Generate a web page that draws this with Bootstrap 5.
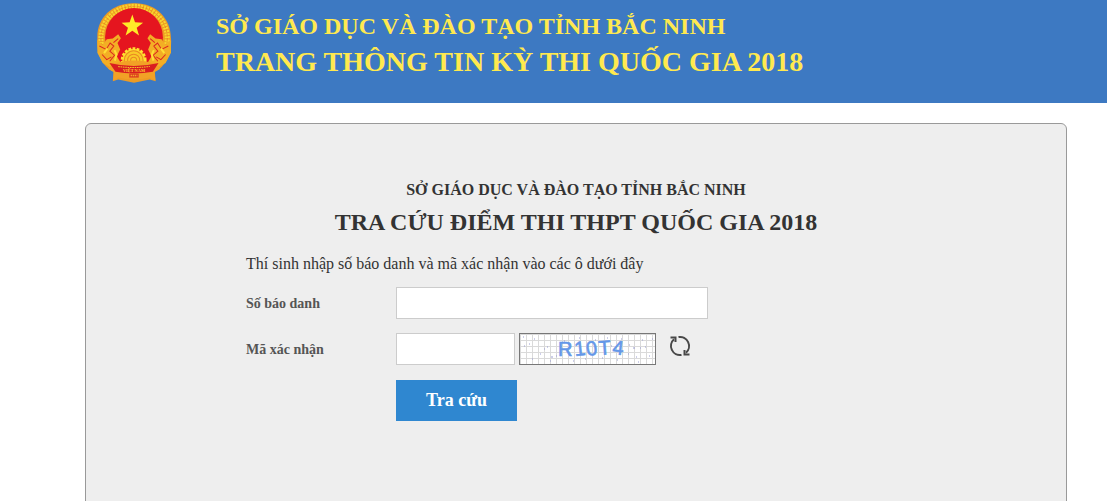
<!DOCTYPE html>
<html lang="vi">
<head>
<meta charset="utf-8">
<meta name="viewport" content="width=device-width, initial-scale=1">
<title>Tra cứu điểm thi THPT Quốc gia 2018</title>
<link href="https://cdn.jsdelivr.net/npm/bootstrap@5.3.0/dist/css/bootstrap.min.css" rel="stylesheet">
<style>
  body { font-family: "Liberation Serif", "Times New Roman", serif; color: #333; background: #fff; overflow-x: hidden; }
  .site-header { background: #3d79c2; color: #ffe94f; min-height: 103px; padding: 3px 40px 0 96px; gap: 44px; }
  .emblem { width: 76px; height: 80px; flex: none; }
  .header-text { padding-top: 7px; }
  .dept-name { font-size: 24px; line-height: 32px; }
  .site-name { font-size: 28px; line-height: 40px; }
  .page-area { padding: 20px 40px 0 85px; }
  .lookup-panel { background: #eee; border: 1px solid #999; border-radius: 6px; padding: 52px 16px 90px; }
  .lookup-form { max-width: 660px; }
  .form-dept { font-size: 16px; line-height: 28px; }
  .form-title { font-size: 24px; line-height: 36px; }
  .form-hint { font-size: 16px; line-height: 24px; margin: 12px 0 11px; }
  .field-row { margin-bottom: 14px; }
  .field-label { width: 150px; flex: none; font-size: 14px; color: #555; }
  .field-input { height: 32px; border: 1px solid #ccc; border-radius: 0; padding: 4px 8px; font-size: 16px; }
  .field-wide { width: 312px; }
  .field-code { width: 119px; }
  .captcha { width: 137px; height: 32px; border: 1px solid #777; background: #fff; }
  .captcha text { font-family: "Liberation Sans", Arial, sans-serif; }
  .reload-btn { margin: 0 0 6px 9px; line-height: 1; color: #484848; }
  .submit-btn { width: 121px; height: 41px; margin: 1px 0 0 150px; border-radius: 0; background: #2f87d0; color: #fff; font-size: 18px; font-weight: 700; padding: 0; }
  .submit-btn:hover { background: #2878bb; color: #fff; }
</style>
<script src="https://cdn.jsdelivr.net/npm/bootstrap@5.3.0/dist/js/bootstrap.bundle.min.js"></script>
</head>
<body>
<header class="site-header d-flex align-items-start">
  <svg class="emblem" viewBox="20 11 226 236" preserveAspectRatio="none" role="img" aria-label="Quốc huy Việt Nam">
    <path d="M133 12C70 10 22 55 24 115C21 148 30 184 60 207L72 212L70 242L86 237L133 246L180 237L197 242L195 212L207 207C236 184 246 148 243 115C243 55 196 10 133 12Z" fill="#ed9b24"/>
    <path d="M40 150C18 80 66 21 133 21S250 80 226 150" fill="none" stroke="#f8d62e" stroke-width="15" stroke-dasharray="6 3"/>
    <path d="M40 150C18 80 66 21 133 21S250 80 226 150" fill="none" stroke="#e87822" stroke-width="2" stroke-dasharray="9 4"/>
    <circle cx="133" cy="112" r="86" fill="#e5151f"/>
    <path d="M24 120l16 16 12-18 18-2 16-13 8 12-10 14 8 19-10 20 14 24-26 13-30-17-16-30zM243 120l-16 16-12-18-18-2-16-13-8 12 10 14-8 19 10 20-14 24 26 13 30-17 16-30z" fill="#f3ae25"/>
    <path d="M30 138l20 10 12-19 11 9-12 15 14 12-14 18M38 163l14 15 14-8M72 128l14-12M235 138l-20 10-12-19-11 9 12 15-14 12 14 18M227 163l-14 15-14-8M195 128l-14-12" fill="none" stroke="#dc2720" stroke-width="3"/>
    <path d="M54 145l-10 14M75 150l6 13-5 18M213 145l10 14M192 150l-6 13 5 18" fill="none" stroke="#ffde35" stroke-width="6"/>
    <path d="M128 45l8 23 24 1-19 15 7 23-20-14-20 14 7-23-19-15 24-1z" fill="#ffeb28"/>
    <circle cx="132" cy="180" r="34" fill="#f9c928" stroke="#ffe12f" stroke-width="9" stroke-dasharray="8 4"/>
    <g fill="none" stroke="#e98922" stroke-width="3"><circle cx="132" cy="180" r="28"/><circle cx="132" cy="180" r="18"/><circle cx="132" cy="180" r="9"/></g>
    <path d="M70 190Q133 171 197 190L211 205L194 215L197 240L179 231Q133 242 87 231L72 240L73 215L56 205Z" fill="#f2a126"/>
    <path d="M60 188Q132 206 206 188L189 214Q132 224 78 214Z" fill="#d91d20"/>
    <path d="M86 198Q132 205 180 198" fill="none" stroke="#f4bd29" stroke-width="3" stroke-dasharray="5 2"/>
    <text x="133" y="216" text-anchor="middle" font-family="Liberation Serif, serif" font-weight="700" font-size="13" fill="#ffd42c">VIỆT NAM</text>
    <path d="M119 219h28v12h-28z" fill="#dc3c20"/><path d="M123 225h20" stroke="#f3aa28" stroke-width="4" stroke-dasharray="4 2"/>
  </svg>
  <div class="header-text">
    <div class="dept-name fw-bold">SỞ GIÁO DỤC VÀ ĐÀO TẠO TỈNH BẮC NINH</div>
    <div class="site-name fw-bold">TRANG THÔNG TIN KỲ THI QUỐC GIA 2018</div>
  </div>
</header>

<main class="page-area">
  <section class="lookup-panel">
    <form class="lookup-form mx-auto" onsubmit="return false">
      <div class="form-dept fw-bold text-center">SỞ GIÁO DỤC VÀ ĐÀO TẠO TỈNH BẮC NINH</div>
      <h1 class="form-title fw-bold text-center mb-0">TRA CỨU ĐIỂM THI THPT QUỐC GIA 2018</h1>
      <p class="form-hint">Thí sinh nhập số báo danh và mã xác nhận vào các ô dưới đây</p>
      <div class="field-row d-flex align-items-center">
        <label class="field-label fw-bold" for="sbd">Số báo danh</label>
        <input class="form-control field-input field-wide" id="sbd" type="text">
      </div>
      <div class="field-row d-flex align-items-center">
        <label class="field-label fw-bold" for="code">Mã xác nhận</label>
        <div class="d-flex align-items-center gap-1">
          <input class="form-control field-input field-code" id="code" type="text">
          <svg class="captcha" viewBox="0 0 135 30" role="img" aria-label="Mã xác nhận">
            <defs><pattern id="grid" width="6" height="6" patternUnits="userSpaceOnUse"><path d="M0 .5H6M.5 0V6" stroke="#dadada" fill="none"/></pattern></defs>
            <rect width="135" height="30" fill="url(#grid)"/>
            <path d="M3 3h1M9 10h1M4 12h1M14 5h1M24 15h1M27 13h1M31 23h2M36 22h1M20 20h1M30 27h1M44 7h1M48 18h1M12 25h1M59 4h1M65 25h1M75 6h1M87 4h1M91 12h1M97 26h1M101 5h1M108 20h1M113 14h2M116 23h1M120 14h1M122 6h1M125 13h1M129 22h1M118 28h1M109 11h1M132 5h1M82 24h1M53 27h1" stroke="#9a9dd2" stroke-width="1"/>
            <text font-size="20" fill="#6497e8" stroke="#6497e8" stroke-width=".6" x="38 55 67 79 92" y="22 22 22 21 20" rotate="0 -6 -8 -4 6">R10T4</text>
          </svg>
          <button class="btn border-0 p-0 reload-btn" type="button" aria-label="Đổi mã xác nhận">
            <svg class="d-block" width="22" height="22" viewBox="0 0 22 22" fill="none" stroke="currentColor" stroke-width="2">
              <path d="M5 4.300A9 9 0 0 0 12.500 19.900M9.500 2.100A9 9 0 0 1 17 17.700"/>
              <path d="M1.500 2.500h5v4.500M20.500 19.500h-5v-4.500"/>
            </svg>
          </button>
        </div>
      </div>
      <button class="btn border-0 submit-btn" type="submit">Tra cứu</button>
    </form>
  </section>
</main>
</body>
</html>
